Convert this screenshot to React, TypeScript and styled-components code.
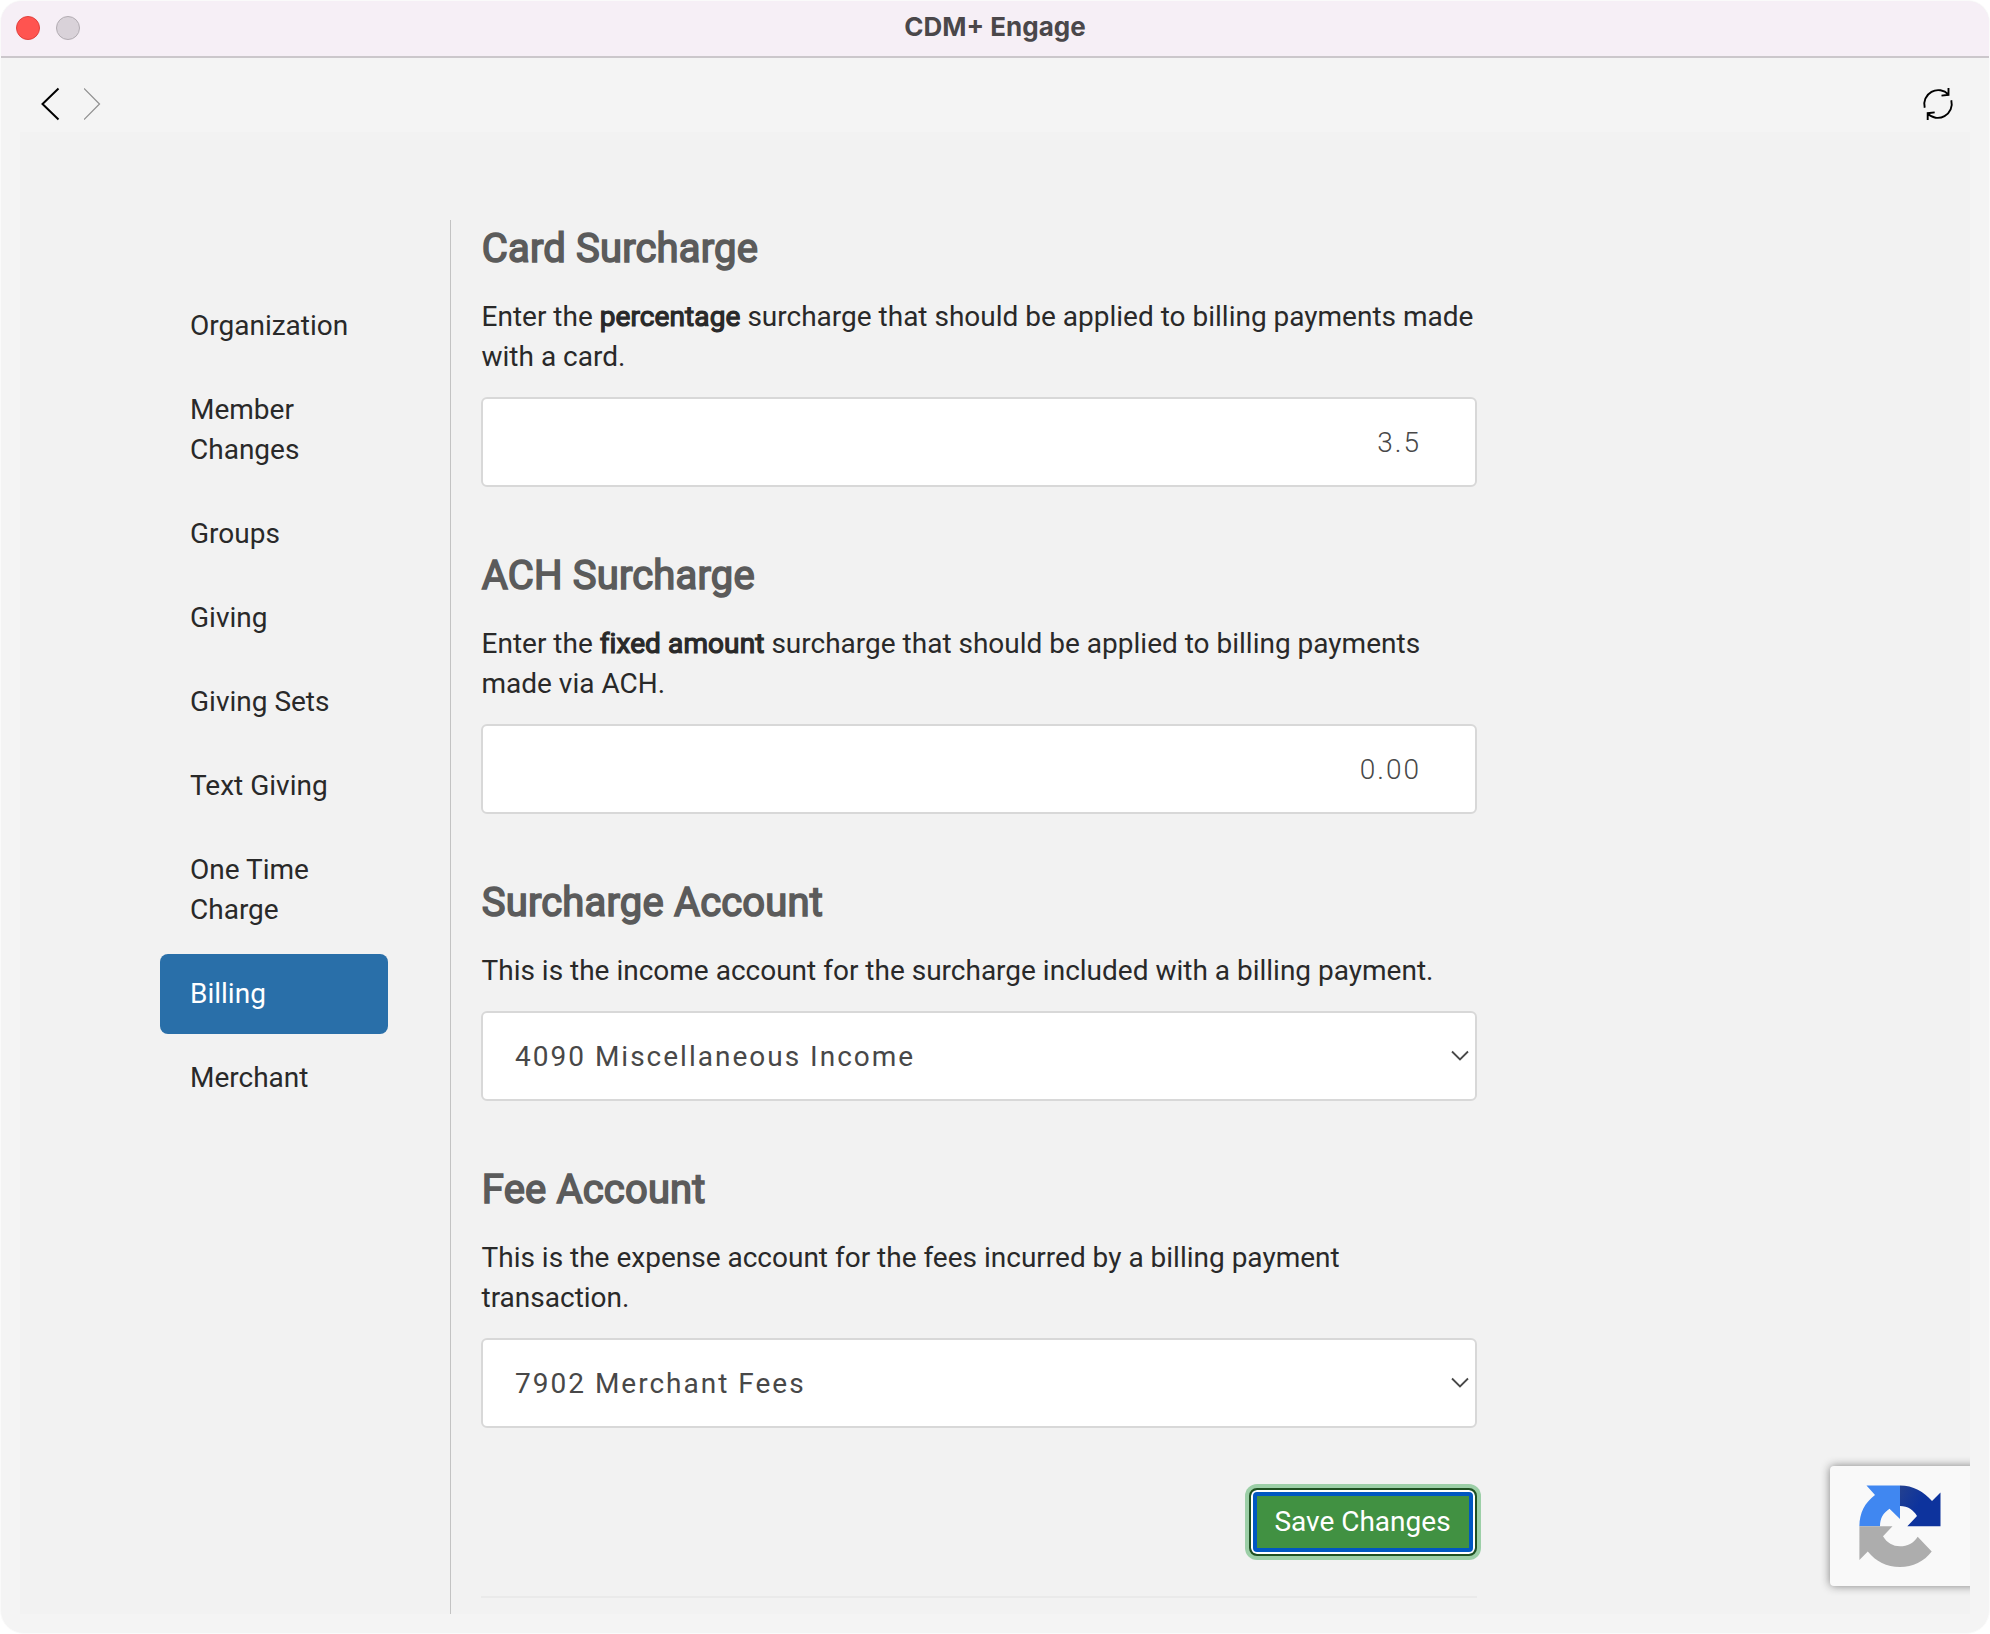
import React from 'react';
import styled, { createGlobalStyle, css } from 'styled-components';

const GlobalStyle = createGlobalStyle`
  *, *::before, *::after { box-sizing: border-box; }
  body { margin: 0; background: #fff; font-family: Roboto, 'Liberation Sans', sans-serif; }
  h2, p, ul { margin: 0; padding: 0; }
`;

const Window = styled.div`
  display: flex;
  flex-direction: column;
  width: 1990px;
  height: 1634px;
  border: 1px solid #fafafa;
  border-radius: 22px 22px 24px 24px;
  background: #f4f4f4;
  overflow: hidden;
`;

const TitleBar = styled.header`
  display: grid;
  grid-template-columns: 1fr auto 1fr;
  align-items: center;
  flex: none;
  height: 57px;
  padding: 0 15px 1px;
  background: #f6eff6;
  border-bottom: 2px solid #cbc7cb;
`;

const Lights = styled.div`
  display: flex;
  gap: 16px;
`;

const Light = styled.span<{ $fill: string; $ring: string }>`
  width: 24px;
  height: 24px;
  border-radius: 50%;
  background: ${p => p.$fill};
  border: 1px solid ${p => p.$ring};
`;

const Title = styled.span`
  margin-bottom: 3px;
  font: 700 26px/32px Inter, 'Liberation Sans', sans-serif;
  color: #4a474a;
`;

const Toolbar = styled.nav`
  display: flex;
  align-items: center;
  justify-content: space-between;
  flex: none;
  height: 74px;
  padding: 28px 34px 10px 38px;
`;

const ToolGroup = styled.div`
  display: flex;
  gap: 19px;
`;

const ToolButton = styled.button`
  display: flex;
  padding: 0;
  border: 0;
  background: none;
`;

const WebView = styled.main`
  position: relative;
  display: flex;
  flex: none;
  width: 1950px;
  height: 1482px;
  margin-left: 19px;
  padding: 88px 0 0 140px;
  background: #f2f2f2;
  overflow: hidden;
`;

const Sidebar = styled.ul`
  display: flex;
  flex-direction: column;
  gap: 4px;
  width: 228px;
  padding-top: 66px;
  list-style: none;
`;

const SidebarItem = styled.li<{ $active?: boolean }>`
  padding: 20px 30px;
  border-radius: 8px;
  font-size: 28px;
  line-height: 40px;
  color: #292929;
  ${p => p.$active && css`
    background: #296fa9;
    color: #fff;
  `}
`;

const Content = styled.div`
  width: 1027px;
  margin-left: 62px;
  padding-left: 30px;
  border-left: 1px solid #c3c3c3;
`;

const Section = styled.section`
  padding-top: 5px;
  margin-bottom: 60px;
`;

const Heading = styled.h2`
  margin-bottom: 24px;
  padding-left: 0.8px;
  font-size: 40px;
  font-weight: 400;
  line-height: 48px;
  letter-spacing: 0.16px;
  color: #5b5b5b;
  -webkit-text-stroke: 1.6px #5b5b5b;
`;

const Description = styled.p`
  margin-bottom: 20px;
  padding-left: 0.5px;
  font-size: 28px;
  line-height: 40px;
  color: #292929;
`;

const Strong = styled.strong`
  font-weight: 400;
  letter-spacing: 0.1px;
  -webkit-text-stroke: 1.2px #292929;
`;

const fieldBox = css`
  width: 996px;
  height: 90px;
  border: 2px solid #d8d8d8;
  border-radius: 6px;
  background: #fff;
  color: #484848;
  font-family: Roboto, 'Liberation Sans', sans-serif;
  font-size: 28px;
  letter-spacing: 2px;
`;

const TextField = styled.input`
  ${fieldBox}
  display: block;
  padding: 0 54px 0 32px;
  font-weight: 300;
  text-align: right;
  outline: 0;
`;

const SelectField = styled.div`
  ${fieldBox}
  display: flex;
  align-items: center;
  justify-content: space-between;
  padding: 0 5px 0 32px;
`;

const Actions = styled.div`
  display: flex;
  justify-content: flex-end;
  padding-bottom: 40px;
  border-bottom: 2px solid #eaeaea;
`;

const SaveButton = styled.button`
  width: 228px;
  height: 68px;
  padding: 0 1px 0 0;
  border: 2px solid #1f5021;
  border-radius: 8px;
  background: #419142;
  color: #fff;
  font: 400 28px/40px Roboto, 'Liberation Sans', sans-serif;
  box-shadow: 0 0 0 4px #9ccfa7, inset 0 0 0 2px #fff, inset 0 0 0 6px #0057c2;
`;

const CaptchaBadge = styled.aside`
  position: absolute;
  right: -372px;
  bottom: 28px;
  width: 512px;
  height: 120px;
  padding: 18px 28px;
  border-radius: 4px;
  background: #f9f9f9;
  box-shadow: 0 0 10px #808080;
`;

const BackIcon = () => (
  <svg width="26" height="36" viewBox="0 0 26 36" fill="none" stroke="#000" strokeWidth="2">
    <path d="M19.5 2.5 3.5 18l16 15.5" />
  </svg>
);

const ForwardIcon = () => (
  <svg width="20" height="36" viewBox="0 0 20 36" fill="none" stroke="#8f8f8f" strokeWidth="1.2">
    <path d="M0 2.5 15.5 18 0 33.5" />
  </svg>
);

const ReloadIcon = () => (
  <svg width="34" height="36" viewBox="0 0 34 36" fill="none" stroke="#000" strokeWidth="1.9">
    <path d="M3.7 21.7A14 14 0 0 1 27.5 8.600M27.500 2v6.800l-7 .8M30.300 14.300A14 14 0 0 1 6.500 27.400M6.700 34v-6.800l7-.8" />
  </svg>
);

const Chevron = () => (
  <svg width="20" height="14" viewBox="0 0 20 14" fill="none" stroke="#484848" strokeWidth="1.8">
    <path d="M2 2.5 10 10.5l8-8" />
  </svg>
);

/* Logo of the captcha badge: three arrows chasing each other. */
const CaptchaLogo = () => (
  <svg width="84" height="84" viewBox="0 0 84 84">
    <defs>
      <linearGradient id="navy" x1="0" y1="0" x2="0.55" y2="0.35">
        <stop offset="0" stopColor="#24418f" />
        <stop offset="1" stopColor="#0d339d" />
      </linearGradient>
    </defs>
    <path fill="url(#navy)" d="M42 1.4C55 1.4 66 7.500 74 17l8.500-8.500V42.300H49.300L59 32C55.500 26 50 22 42 22Z" />
    <path fill="#4087f1" d="M42 1.400V35L31.500 24.700C25 29 22 34.500 22 42.300H1.400C1.400 29 7 18.500 17 11L8.500 1.400Z" />
    <path fill="#adadad" d="M1.400 42.300H34.500L25 52.300C29 59 35 62.300 42 62.300c7.500 0 13.500-3 17.700-9.600L73.700 67.500C66 77.500 55 83 42 83 28.500 83 18 77.500 9.800 67.500L1.400 76Z" />
  </svg>
);

const pages = [
  'Organization', 'Member Changes', 'Groups', 'Giving', 'Giving Sets',
  'Text Giving', 'One Time Charge', 'Billing', 'Merchant',
];

const Select = ({ value }: { value: string }) => (
  <SelectField role="combobox">
    {value}
    <Chevron />
  </SelectField>
);

export default function App() {
  return (
    <>
      <GlobalStyle />
      <Window>
        <TitleBar>
          <Lights>
            <Light $fill="#ff5450" $ring="#e0403d" />
            <Light $fill="#d9d2d9" $ring="#b2acb2" />
          </Lights>
          <Title>CDM+ Engage</Title>
        </TitleBar>
        <Toolbar>
          <ToolGroup>
            <ToolButton aria-label="Back"><BackIcon /></ToolButton>
            <ToolButton aria-label="Forward"><ForwardIcon /></ToolButton>
          </ToolGroup>
          <ToolButton aria-label="Reload"><ReloadIcon /></ToolButton>
        </Toolbar>
        <WebView>
          <Sidebar>
            {pages.map(page => (
              <SidebarItem key={page} $active={page === 'Billing'}>{page}</SidebarItem>
            ))}
          </Sidebar>
          <Content>
            <Section>
              <Heading>Card Surcharge</Heading>
              <Description>
                Enter the <Strong>percentage</Strong> surcharge that should be applied to billing payments made with a card.
              </Description>
              <TextField defaultValue="3.5" />
            </Section>
            <Section>
              <Heading>ACH Surcharge</Heading>
              <Description>
                Enter the <Strong>fixed amount</Strong> surcharge that should be applied to billing payments made via ACH.
              </Description>
              <TextField defaultValue="0.00" />
            </Section>
            <Section>
              <Heading>Surcharge Account</Heading>
              <Description>This is the income account for the surcharge included with a billing payment.</Description>
              <Select value="4090 Miscellaneous Income" />
            </Section>
            <Section>
              <Heading>Fee Account</Heading>
              <Description>This is the expense account for the fees incurred by a billing payment transaction.</Description>
              <Select value="7902 Merchant Fees" />
            </Section>
            <Actions>
              <SaveButton>Save Changes</SaveButton>
            </Actions>
          </Content>
          <CaptchaBadge>
            <CaptchaLogo />
          </CaptchaBadge>
        </WebView>
      </Window>
    </>
  );
}
